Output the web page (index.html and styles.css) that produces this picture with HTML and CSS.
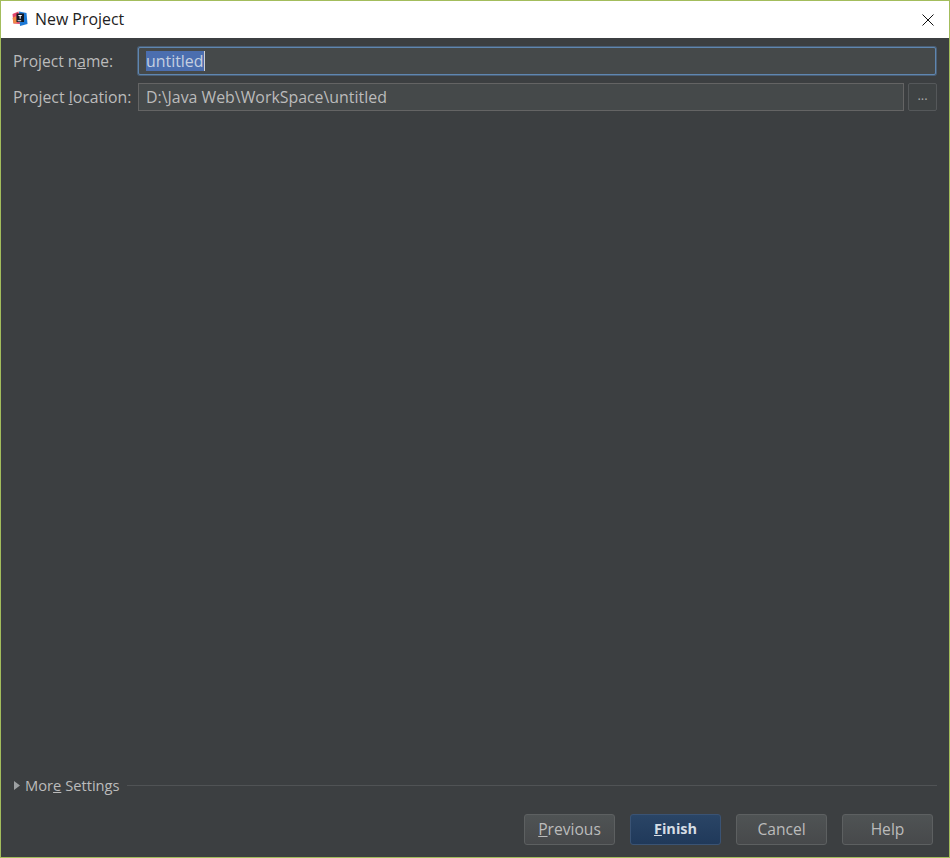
FILE: index.html
```html
<!DOCTYPE html>
<html lang="en">
<head>
<meta charset="utf-8">
<title>New Project</title>
<link rel="stylesheet" href="styles.css">
</head>
<body>
<div class="window">
  <header class="titlebar">
    <svg class="app-icon" width="16" height="16" viewBox="0 0 16 16">
      <path d="M0.5 3 L6.5 0.5 L8 13 L1.5 12.5 Z" fill="#e2456a"/>
      <path d="M0.5 7 L4 5 L5 12 L1.5 12.5 Z" fill="#ef8a45"/>
      <path d="M7 0.5 L14.5 2 L15.5 13 L8 15 Z" fill="#1d79d6"/>
      <rect x="4.5" y="2.5" width="7.5" height="8.5" fill="#141a24"/>
      <rect x="6.4" y="4" width="3.4" height="1" fill="#fff"/>
      <rect x="7.6" y="4.5" width="1.1" height="3.2" fill="#fff"/>
      <rect x="5.6" y="9.3" width="3.6" height="0.9" fill="#fff"/>
    </svg>
    <span class="title">New Project</span>
    <svg class="close" width="12" height="12" viewBox="0 0 12 12">
      <path d="M0.5 0.5 L11.5 11.5 M11.5 0.5 L0.5 11.5" stroke="#111" stroke-width="1" fill="none"/>
    </svg>
  </header>
  <main class="content">
    <div class="form">
      <label class="label name">Project n<u>a</u>me:</label>
      <div class="input focused"><span class="selected">untitled</span><span class="caret"></span></div>
      <label class="label">Project <u>l</u>ocation:</label>
      <div class="location-row">
        <div class="input">D:\Java Web\WorkSpace\untitled</div>
        <button class="browse" type="button">...</button>
      </div>
    </div>
    <div class="spacer"></div>
    <div class="more">
      <svg class="arrow" width="6" height="9" viewBox="0 0 6 9"><path d="M0 0 L6 4.5 L0 9 Z" fill="#9da0a2"/></svg>
      <span class="more-label">Mor<u>e</u> Settings</span>
      <span class="rule"></span>
    </div>
    <footer class="buttons">
      <button class="btn" type="button"><u>P</u>revious</button>
      <button class="btn primary" type="button"><u>F</u>inish</button>
      <button class="btn" type="button">Cancel</button>
      <button class="btn" type="button">Help</button>
    </footer>
  </main>
</div>
</body>
</html>
```

FILE: styles.css
```css
* { box-sizing: border-box; }
html, body { margin: 0; height: 100%; }
body { font-family: "Open Sans", "Noto Sans", sans-serif; font-size: 15px; }
.window {
  width: 950px; height: 858px;
  border: 1px solid #a3bd5c;
  display: flex; flex-direction: column;
  background: #3c3f41;
}
.titlebar {
  height: 37px; background: #fff;
  display: flex; align-items: center;
  padding: 0 15px 2px 11px;
  color: #222;
}
.app-icon { margin-right: 7px; }
.title { flex: 1; font-size: 15.9px; }
.close { margin-top: 2px; }
.content {
  flex: 1; display: flex; flex-direction: column;
  padding: 9px 12px 12px 12px;
  color: #bbbbbb;
}
.form {
  display: grid;
  grid-template-columns: 125px 1fr;
  row-gap: 8px;
  align-items: center;
}
.label { white-space: nowrap; font-size: 15.8px; }
.label.name { font-size: 15.55px; }
.input {
  height: 28px; line-height: 26px;
  padding: 0 7px;
  background: #45494a;
  border: 1px solid #646464;
  color: #bbbbbb;
  font-size: 15.9px;
  white-space: nowrap;
}
.input.focused {
  border: 1px solid #5f86b0;
  box-shadow: 0 0 0 1px #4a5f76;
  border-radius: 2px;
  margin-right: 1px;
  display: flex; align-items: center;
}
.selected { background: #4b6eaf; color: #c5d0e0; line-height: 20px; }
.caret { width: 1px; height: 20px; background: #d0d0d0; }
.location-row { display: flex; gap: 4px; }
.location-row .input { flex: 1; }
.browse {
  width: 29px; height: 28px; padding: 0 0 5px;
  background: #3f4344; border: 1px solid #55585a; border-radius: 2px;
  color: #a8a8a8; font: inherit; font-size: 13px;
}
.spacer { flex: 1; }
.more { display: flex; align-items: center; height: 22px; }
.arrow { margin: 0 5px 0 1px; }
.more-label { white-space: nowrap; font-size: 14.7px; }
.rule { flex: 1; height: 1px; background: #505355; margin-left: 7px; }
.buttons {
  display: flex; justify-content: flex-end; gap: 15px;
  margin-top: 18px; padding-right: 4px;
}
.btn {
  width: 91px; height: 31px; padding: 0 0 2px;
  font: inherit; font-size: 15.6px; color: #bbbbbb;
  background: linear-gradient(#4f5354, #47494b);
  border: 1px solid #5d6061; border-radius: 3px;
}
.btn.primary {
  background: linear-gradient(#2a4566, #20395a);
  border-color: #3a5374;
  color: #d5dde5; font-weight: 700;
  font-size: 14.5px;
}
```
